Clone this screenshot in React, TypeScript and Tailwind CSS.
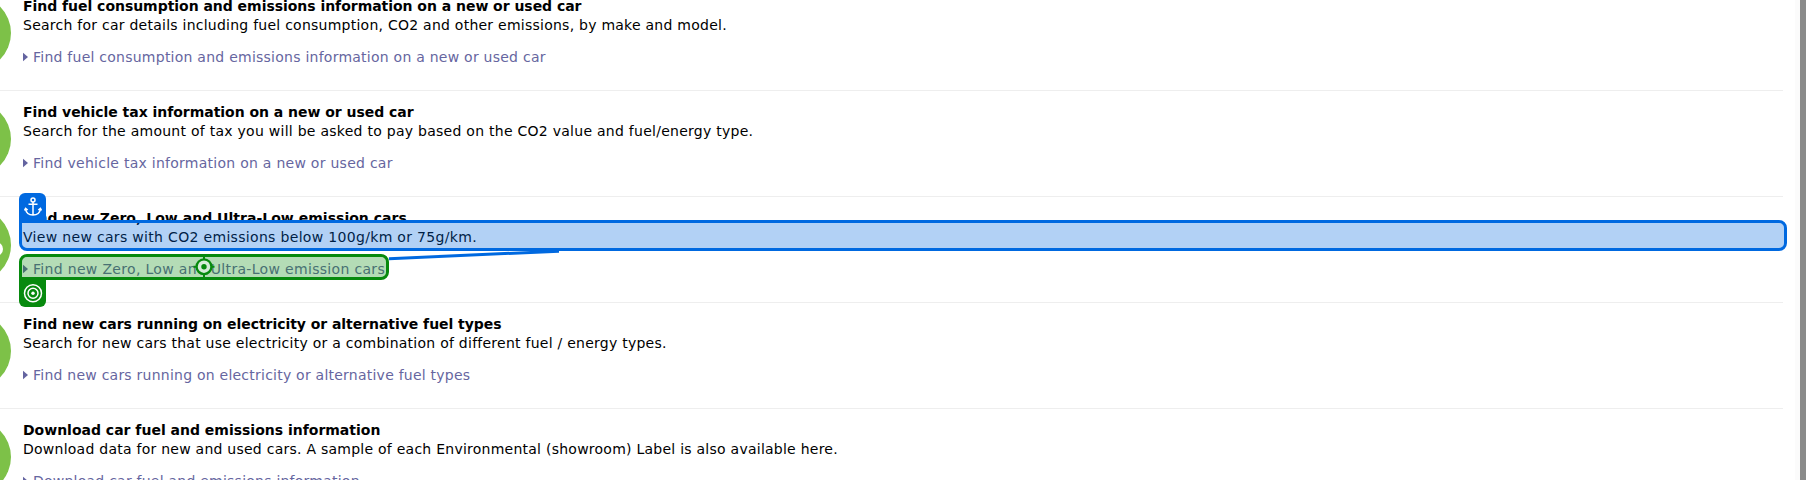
import React from "react";

type Line = { text: string; tracking: string };
type Item = { title: Line; text: Line; link: Line; hole?: boolean };

const items: Item[] = [
  {
    title: { text: "Find fuel consumption and emissions information on a new or used car", tracking: "tracking-[-0.034px]" },
    text: { text: "Search for car details including fuel consumption, CO2 and other emissions, by make and model.", tracking: "tracking-[0.247px]" },
    link: { text: "Find fuel consumption and emissions information on a new or used car", tracking: "tracking-[0.245px]" },
  },
  {
    title: { text: "Find vehicle tax information on a new or used car", tracking: "tracking-[-0.035px]" },
    text: { text: "Search for the amount of tax you will be asked to pay based on the CO2 value and fuel/energy type.", tracking: "tracking-[0.265px]" },
    link: { text: "Find vehicle tax information on a new or used car", tracking: "tracking-[0.265px]" },
  },
  {
    title: { text: "Find new Zero, Low and Ultra-Low emission cars", tracking: "tracking-[0.025px]" },
    text: { text: "View new cars with CO2 emissions below 100g/km or 75g/km.", tracking: "tracking-[0.32px]" },
    link: { text: "Find new Zero, Low and Ultra-Low emission cars", tracking: "tracking-[0.32px]" },
    hole: true,
  },
  {
    title: { text: "Find new cars running on electricity or alternative fuel types", tracking: "tracking-[-0.05px]" },
    text: { text: "Search for new cars that use electricity or a combination of different fuel / energy types.", tracking: "tracking-[0.253px]" },
    link: { text: "Find new cars running on electricity or alternative fuel types", tracking: "tracking-[0.235px]" },
  },
  {
    title: { text: "Download car fuel and emissions information", tracking: "tracking-[-0.005px]" },
    text: { text: "Download data for new and used cars. A sample of each Environmental (showroom) Label is also available here.", tracking: "tracking-[0.248px]" },
    link: { text: "Download car fuel and emissions information", tracking: "tracking-[0.235px]" },
  },
];

function Row({ item }: { item: Item }) {
  return (
    <li className="flex h-[106px] w-[1783px] shrink-0 border-b border-[#eeeeee]">
      <svg className="mt-[10px] h-[76px] w-[23px] shrink-0" viewBox="0 0 23 76">
        <circle cx="-26.5" cy="38" r="37.5" fill="#7dc148" />
        {item.hole && <circle cx="-4" cy="42" r="7" fill="#fff" />}
      </svg>
      <div className="flex flex-col whitespace-nowrap pt-[12px] text-[14px] leading-[19px] text-black">
        <strong className={`self-start font-bold ${item.title.tracking}`}>{item.title.text}</strong>
        <span className={`self-start ${item.text.tracking}`}>{item.text.text}</span>
        <a className={`mt-[13px] flex items-center self-start text-[#6666a0] ${item.link.tracking}`}>
          <svg className="mb-[2px] mr-[5px] h-[10px] w-[5px]" viewBox="0 0 5 10">
            <path d="M0 0.7L5 5L0 9.3Z" fill="#6464a0" />
          </svg>
          {item.link.text}
        </a>
      </div>
    </li>
  );
}

export default function App() {
  return (
    <div className="relative flex h-[480px] w-[1806px] justify-between overflow-hidden bg-white font-['DejaVu_Sans',sans-serif]">
      <ul className="-mt-[15px] flex flex-col">
        {items.map((item) => <Row key={item.title.text} item={item} />)}
      </ul>
      <div className="w-[11px] border-r-[6px] border-[#8a8b8a] bg-[#fbfbfb]" />

      <div className="absolute left-[19px] top-[220px] h-[31px] w-[1768px] rounded-[8px] rounded-tl-none border-[3px] border-[#0069e0] bg-[#0069e0]/30 bg-clip-padding" />
      <div className="absolute left-[19px] top-[254px] h-[26px] w-[370px] rounded-[8px] rounded-bl-none border-[3px] border-[#078a0e] bg-[#078a0e]/30 bg-clip-padding" />
      <svg className="absolute left-0 top-0 h-[480px] w-[1806px]" viewBox="0 0 1806 480" fill="none">
        <path d="M389 258.7L559 251.2" stroke="#0069e0" strokeWidth="3" />
        <circle cx="204" cy="266.7" r="7.4" fill="#d6ecd8" stroke="#078a0e" strokeWidth="2.3" />
        <circle cx="204" cy="266.7" r="2.7" fill="#078a0e" />
        <path d="M204 256V260M204 274V278M193.5 266.7H197M211 266.7H214.5" stroke="#078a0e" strokeWidth="2" />
      </svg>
      <div className="absolute left-[19px] top-[193px] flex h-[28px] w-[27px] justify-center rounded-t-[6px] bg-[#0069e0] pt-[4px]">
        <svg className="h-[20px] w-[18px]" viewBox="0 0 18 20" fill="none" stroke="white" strokeWidth="1.5">
          <circle cx="9" cy="3" r="2" />
          <path d="M9 5V18M4.5 7.2H13.5M1.5 11.5C2 15.5 5 18 9 18C13 18 16 15.5 16.5 11.5M0.5 13.5L1.6 11.3L3.7 13M14.3 13L16.4 11.3L17.5 13.5" />
        </svg>
      </div>
      <div className="absolute left-[19px] top-[279px] flex h-[28px] w-[27px] items-center justify-center rounded-b-[6px] bg-[#078a0e]">
        <svg className="h-[20px] w-[20px]" viewBox="0 0 20 20" fill="none" stroke="white" strokeWidth="1.5">
          <circle cx="10" cy="10.3" r="8.5" />
          <circle cx="10" cy="10.3" r="5" />
          <circle cx="10" cy="10.3" r="1.7" fill="white" stroke="none" />
        </svg>
      </div>
    </div>
  );
}
